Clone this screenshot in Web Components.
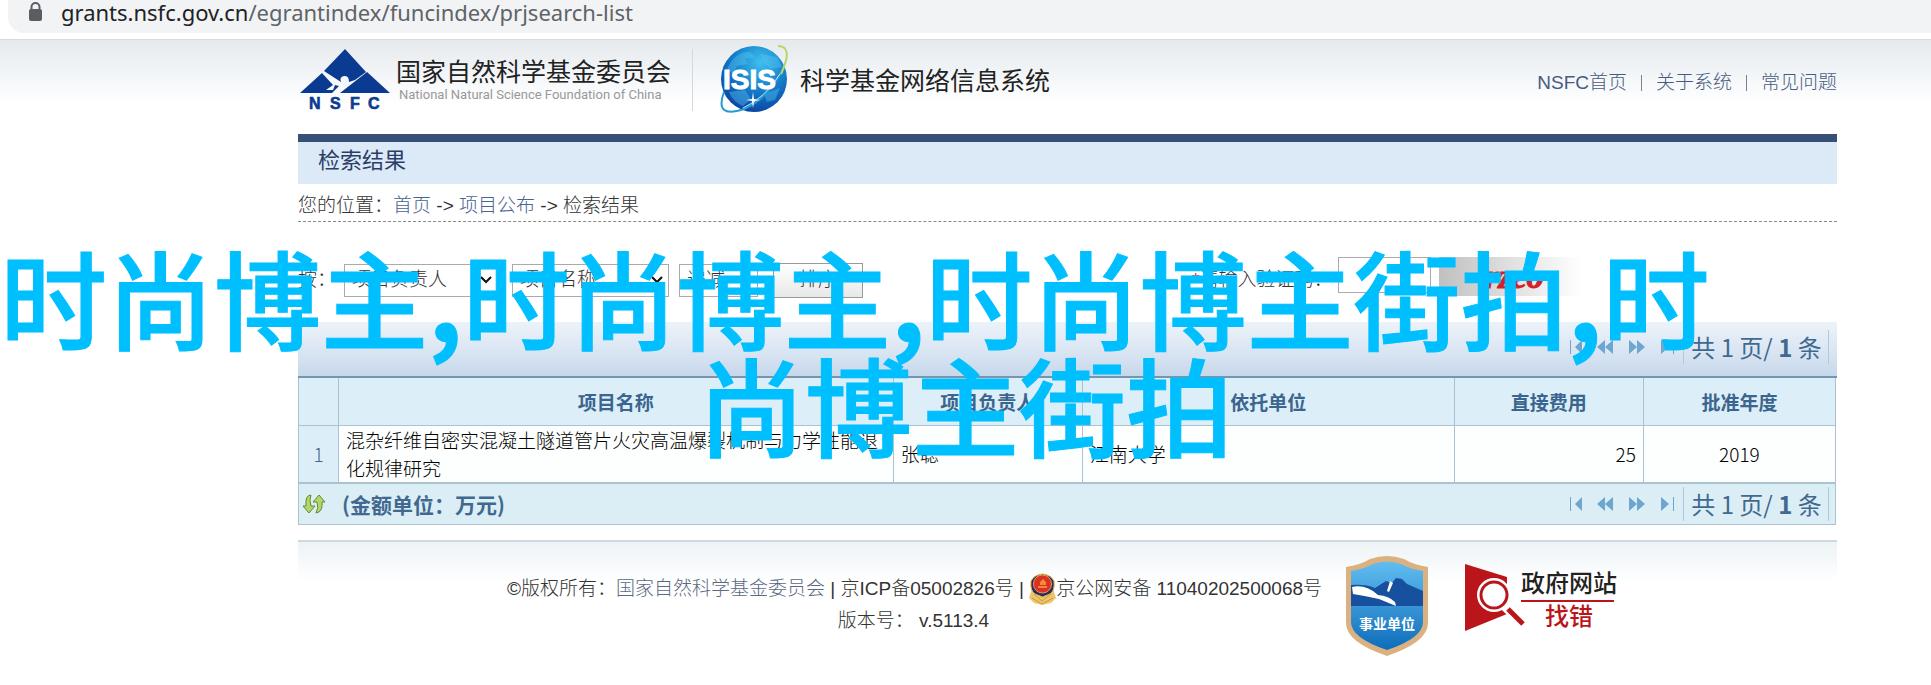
<!DOCTYPE html>
<html lang="zh-CN">
<head>
<meta charset="utf-8">
<title>检索结果</title>
<style>
body{margin:0;background:#fff;color:#333;font:19px/28px "Liberation Sans","Noto Sans CJK SC",sans-serif;overflow-x:hidden}
</style>
</head>
<body>
<app-page></app-page>
<script>
const define=(name,html)=>customElements.define(name,class extends HTMLElement{
  constructor(){super();this.attachShadow({mode:'open'}).innerHTML=html;}
});

define('address-bar',`<style>
:host{display:block;height:40px;background:#fff;border-bottom:1px solid #d5dbdf;box-sizing:border-box}
div{display:flex;align-items:center;gap:18px;height:33px;margin-left:8px;padding:0 0 10px 20px;box-sizing:border-box;background:#f1f3f4;border-radius:0 0 0 16px;font:22px/22px "Noto Sans",sans-serif;color:#5f6368}
b{font-weight:400;color:#202124}
</style><div><svg width="15" height="20" viewBox="0 0 15 20"><path d="M3.500 8V5a4 4 0 0 1 8 0v3" fill="none" stroke="#5a5e63" stroke-width="2"/><rect x="1" y="7" width="13" height="12" rx="2" fill="#5a5e63"/></svg><span><b>grants.nsfc.gov.cn</b>/egrantindex/funcindex/prjsearch-list</span></div>`);

define('nsfc-logo',`<style>
:host{display:flex;gap:6px;align-items:flex-start}
.t{padding-top:6px;color:#222}
.cn{font:25px/30px "Noto Sans CJK SC",sans-serif}
.en{font:13px/20px Roboto,sans-serif;color:#999;padding-left:3px;white-space:nowrap}
</style><svg width="90" height="64" viewBox="0 0 90 64"><path d="M45 0L66 23 55 31 49 33Q49 26 44 27 39 28 41 33L24 22Z" fill="#0b3b90"/><path d="M22 24L33 36 26 41 33 41 35 36 39 37 32 44H0Z" fill="#0b3b90"/><path d="M67 23L90 44H40Z" fill="#0b3b90"/><text y="60" font-family="Liberation Sans" font-weight="700" font-size="16" fill="#0b3b90" stroke="#0b3b90" stroke-width=".6"><tspan x="9">N</tspan><tspan x="30">S</tspan><tspan x="50">F</tspan><tspan x="68">C</tspan></text></svg>
<div class="t"><div class="cn">国家自然科学基金委员会</div><div class="en">National Natural Science Foundation of China</div></div>`);

define('isis-logo',`<style>
:host{display:flex;gap:9px;align-items:center;font:25px/28px "Noto Sans CJK SC",sans-serif;color:#222}
</style><svg width="72" height="70" viewBox="0 0 72 70"><defs><radialGradient id="g" cx=".6" cy=".25" r=".8"><stop offset="0" stop-color="#3fc0ee"/><stop offset=".5" stop-color="#1580cc"/><stop offset="1" stop-color="#0b3f9e"/></radialGradient></defs><circle cx="35" cy="35" r="33" fill="url(#g)"/><path d="M8 25Q16 7 31 8L36 13 26 15 29 20 18 22 14 30ZM41 10L58 13 63 23 52 25 46 20ZM10 48L26 46 32 55 24 62Q14 58 10 48ZM45 50L61 44 56 56 48 58Z" fill="#58c8f2" opacity=".4"/><path d="M5 48Q-5 75 25 65 48 55 62 28" fill="none" stroke="#279bd5" stroke-width="2"/><path d="M62 30Q75 2 59 2" fill="none" stroke="#b8d66a" stroke-width="2"/><path d="M24 64Q46 54 61 30" fill="none" stroke="#bce9fb"/><text x="4" y="45" font-family="Liberation Sans" font-weight="700" font-size="28" fill="#fff" stroke="#fff">ISIS</text><path d="M34 48l1 7 6 1-6 1-1 7-1-7-6-1 6-1z" fill="#fff"/></svg><span>科学基金网络信息系统</span>`);

define('site-header',`<style>
:host{display:block;background:linear-gradient(#e6eaed,#f1f4f7 30px,#fff 64px)}
.in{display:flex;height:94px;margin:0 94px 0 298px;padding-top:9px;box-sizing:border-box;align-items:flex-start}
nsfc-logo{margin-left:2px}
.sep{width:1px;height:62px;background:#d4d8dc;margin:0 26px 0 21px}
isis-logo{margin-top:-5px}
nav{margin-left:auto;display:flex;gap:12px;padding-top:20px;color:#5b6683}
nav span{width:1px;height:16px;margin:6px 2px 0;background:#77819a}
a{color:#475a80;text-decoration:none;font-weight:300}
</style><div class="in"><nsfc-logo></nsfc-logo><div class="sep"></div><isis-logo></isis-logo><nav><a href="#">NSFC首页</a><span></span><a href="#">关于系统</a><span></span><a href="#">常见问题</a></nav></div>`);

define('page-title',`<style>
:host{display:block}
h1{margin:0;border-top:8px solid #384f78;background:#dceaf7;height:42px;padding-left:20px;font-size:22px;line-height:38px;font-weight:400;color:#2c3e68}
p{margin:0;height:37px;line-height:43px;border-bottom:1px dashed #8a8a8a;font-weight:300}
a{color:#47638f;text-decoration:none}
</style><h1>检索结果</h1><p>您的位置：<a href="#">首页</a> -&gt; <a href="#">项目公布</a> -&gt; 检索结果</p>`);

define('sort-form',`<style>
:host{display:block;height:100px;box-sizing:border-box;padding-top:38px;font-weight:300}
form{display:flex;align-items:center;height:40px}
form>*{flex:none}
select,input,button{font:inherit;color:#333;box-sizing:border-box;margin:0}
select{height:33px;border:1px solid #aaa;padding:0 7px;border-radius:0;appearance:none;background:#fff url("data:image/svg+xml,%3Csvg xmlns='http://www.w3.org/2000/svg' width='12' height='8'%3E%3Cpath d='M1 1l5 5 5-5' fill='none' stroke='%23111' stroke-width='2'/%3E%3C/svg%3E") no-repeat right 5px center}
.a{width:154px;margin:0 14px 0 8px}.b{width:157px;margin-right:10px}.c{width:79px;margin-right:15px}
button{width:90px;height:35px;border:1px solid #999;background:linear-gradient(#fff,#e8e8e8);padding:0}
.cap{margin-left:329px}i{color:#c33;font-style:normal}
input{width:93px;height:36px;border:1px solid #aaa;margin:0 8px 10px 6px}
svg{margin-bottom:8px}
</style><form><label for="s">按：</label><select id="s" class="a"><option>项目负责人</option></select><select class="b" aria-label="排序字段"><option>项目名称</option></select><select class="c" aria-label="顺序"><option>递减</option></select><button type="button">排序</button><label class="cap" for="k"><i>*</i>请输入验证码：</label><input id="k"><svg width="142" height="39" viewBox="0 0 142 39"><defs><linearGradient id="c"><stop offset="0" stop-color="#c0c0c0"/><stop offset="1" stop-color="#fff"/></linearGradient></defs><rect width="142" height="39" fill="url(#c)"/><text x="46" y="31" font-family="Liberation Serif" font-weight="700" font-style="italic" font-size="34" fill="#d21f2b" stroke="#d21f2b">rzeo</text></svg></form>`);

define('result-pager',`<style>
:host{display:flex;align-items:center;color:#41698f;font:24px/32px "Noto Sans CJK SC",sans-serif}
svg{margin-right:9px;fill:#6fa6cf}
div{border:solid #b3c9d8;border-width:0 1px;height:34px;line-height:34px;padding:0 5px 0 6px;white-space:nowrap;width:133px;text-align:center}
</style><svg width="104" height="16" viewBox="0 0 104 16"><path d="M0 1h1v14H0zM12 1v14L5 8zM35 1v14L27 8zM43 1v14L35 8zM59 1v14l8-7zM67 1v14l8-7zM91 1v14l8-7zM103 1h1v14h-1z"/></svg><div>共 1 页/ <b>1</b> 条</div>`);

define('result-grid',`<style>
:host{display:block;color:#111}
.bar{height:56px;box-sizing:border-box;border-bottom:2px solid #7696b0;background:linear-gradient(#ecf2f8,#dfe9f5 40%,#c7d8eb);display:flex;justify-content:flex-end;align-items:center;padding:0 8px 4px 0}
table{width:calc(100% - 1px);border-collapse:collapse;table-layout:fixed;font-family:"Noto Sans CJK SC",sans-serif}
th,td{border:1px solid #a9c3d1;padding:0 7px;text-align:left}
thead th{background:#dceef7;height:47px;color:#3a658f;text-align:center;border-top:0}
tbody td{height:56px;background:#fdfefe;font-weight:300;color:#000}
tbody th{background:#dceef7;color:#41698f;font-weight:300;text-align:center}
tbody td:nth-child(5){text-align:right}tbody td:nth-child(6){text-align:center}
.foot{height:42px;width:calc(100% - 1px);box-sizing:border-box;border:1px solid #a9c3d1;background:#dbeef6;display:flex;align-items:center;padding:0 6px 0 3px;font:700 21px/28px "Noto Sans CJK SC",sans-serif;color:#41698f}
.foot svg{margin-right:16px}result-pager{margin-left:auto}
</style><div class="bar"><result-pager></result-pager></div>
<table><colgroup><col style="width:2.600%"><col style="width:36.100%"><col style="width:12.300%"><col style="width:24.200%"><col style="width:12.300%"><col></colgroup><thead><tr><th></th><th>项目名称</th><th>项目负责人</th><th>依托单位</th><th>直接费用</th><th>批准年度</th></tr></thead><tbody><tr><th>1</th><td>混杂纤维自密实混凝土隧道管片火灾高温爆裂机制与力学性能退化规律研究</td><td>张聪</td><td>江南大学</td><td>25</td><td>2019</td></tr></tbody></table>
<div class="foot"><svg width="24" height="20" viewBox="0 0 24 20"><path d="M9 1Q3 1 4 12H1l6 7 6-7H9Q7 6 9 1Z" fill="#b4d56c" stroke="#638b30"/><path d="M14 19Q21 18 20 8h3L17 1l-6 7h4q2 6-1 11Z" fill="#b4d56c" stroke="#638b30"/></svg><span>(金额单位：万元)</span><result-pager></result-pager></div>`);

define('site-footer',`<style>
:host{display:flex;align-items:flex-start;margin-top:15px;border-top:2px solid #ccdae0;background:linear-gradient(#edf3f6,#fff 40px);padding:14px 0 0 209px;font-weight:300}
.t{text-align:center;width:813px;line-height:32px;padding-top:17px;white-space:nowrap;flex:none}
.t svg{vertical-align:middle;margin:-2px 0 0}
p{margin:0;height:32px}a{color:#5a6880;text-decoration:none}
.s{margin-left:26px;flex:none}.e{margin-left:37px;flex:none}
</style><div class="t"><p>©版权所有：<a href="#">国家自然科学基金委员会</a> | 京ICP备05002826号 | <svg width="27" height="32" viewBox="0 0 27 32"><path d="M3 16L0 25l5 5 8 2 9-2 5-5-3-9Z" fill="#ebc66c"/><path d="M5 21l8 7 9-7M3 25l10 6 11-6" fill="none" stroke="#d19a35"/><path d="M2 8Q5 2 13.500 1 22 2 25 8 26 18 21 21L13.500 24 6 21Q1 18 2 8Z" fill="#292c67" stroke="#e2b54a"/><circle cx="13.500" cy="11" r="9" fill="#dc3021" stroke="#e6a04c"/><path d="M9 13h9v2H9zM11 9l3-3 3 3v3h-6z" fill="#f28a3d"/></svg>京公网安备 11040202500068号</p><p>版本号： v.5113.4</p></div>
<svg class="s" width="82" height="100" viewBox="0 0 82 100"><defs><linearGradient id="b" x2="0" y2="1"><stop offset="0" stop-color="#61bdf0"/><stop offset="1" stop-color="#0e6dbb"/></linearGradient></defs><path d="M0 11Q14 9 24 3 41-3 58 3 68 9 82 11V67Q82 86 41 100 0 86 0 67Z" fill="#dcb181"/><path d="M5 15Q18 13 27 8 41 3 55 8 64 13 77 15V66Q77 82 41 94 5 82 5 66Z" fill="url(#b)"/><path d="M5 29Q20 28 29 32L40 25 46 27 50 22 56 23 61 28 77 35V50H5Z" fill="#17509f"/><path d="M6 31Q20 28 32 39 43 40 49 46L50 50 33 43Q20 40 7 38ZM44 25L41 35 43 36 47 27Z" fill="#fff"/><text x="13" y="73" font-family="Noto Sans CJK SC" font-size="14" font-weight="700" fill="#fff">事业单位</text></svg>
<svg class="e" width="154" height="76" viewBox="0 0 154 76"><path d="M0 8L42 21V58L0 75Z" fill="#b9151b"/><circle cx="29" cy="39" r="17" fill="#fff"/><circle cx="29" cy="39" r="13" fill="#fff" stroke="#b9151b" stroke-width="3"/><path d="M40 50L57 66" stroke="#fff" stroke-width="10"/><path d="M43 53L58 68" stroke="#b9151b" stroke-width="5"/><g font-family="Noto Sans CJK SC" font-size="24" font-weight="500"><text x="56" y="36" fill="#222">政府网站</text><text x="80" y="69" fill="#b9151b">找错</text></g><path d="M56 45H149" stroke="#b9151b" stroke-width="2"/></svg>`);

define('water-mark',`<style>
:host{position:absolute;left:0;right:0;top:242px;font:500 107px/107px "Noto Sans CJK SC",sans-serif;-webkit-text-stroke:1px #00bfff;color:#00bfff;pointer-events:none;white-space:nowrap}
b{font-weight:700}
div+div{text-align:center}
</style><div>时尚博主<b>,</b>时尚博主<b>,</b>时尚博主街拍<b>,</b>时</div><div>尚博主街拍</div>`);

define('app-page',`<style>
:host{display:block;position:relative;overflow:hidden;padding-bottom:13px}
main{margin:0 94px 0 298px}
</style><address-bar></address-bar><site-header></site-header><main><page-title></page-title><sort-form></sort-form><result-grid></result-grid><site-footer></site-footer></main><water-mark></water-mark>`);
</script>
</body>
</html>
